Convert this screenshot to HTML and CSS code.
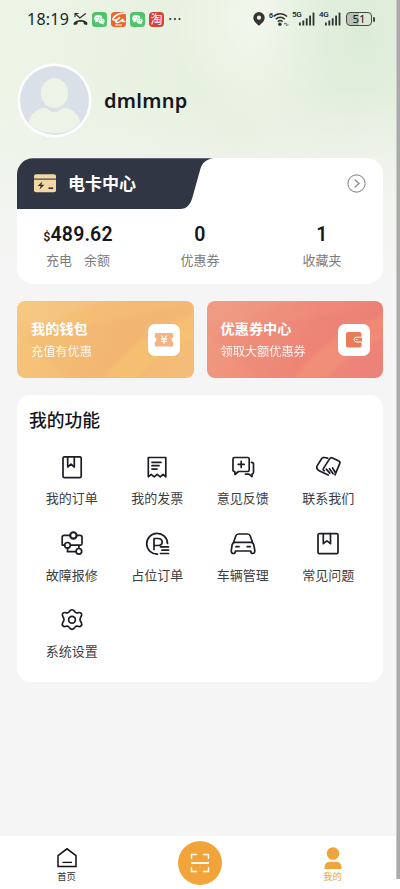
FILE: index.html
```html
<!DOCTYPE html>
<html lang="zh-CN">
<head>
<meta charset="utf-8">
<meta name="viewport" content="width=device-width, initial-scale=1">
<title>我的</title>
<link rel="stylesheet" href="styles.css">
</head>
<body>
<svg width="0" height="0" class="defs">
  <symbol id="wechat" viewBox="0 0 15 15"><rect width="15" height="15" rx="3.5" fill="#50c46c"/><ellipse cx="6.2" cy="6.3" rx="4" ry="3.4" fill="#fff"/><path d="M3.6 8.5 3.3 10.8 5.8 9.5z" fill="#fff"/><ellipse cx="9.6" cy="9.1" rx="3.3" ry="2.8" fill="#fff" stroke="#50c46c" stroke-width=".5"/><path d="M11.2 11l1 1.4-2.4-.6z" fill="#fff"/><g fill="#50c46c"><circle cx="4.9" cy="5.4" r=".5"/><circle cx="7.4" cy="5.4" r=".5"/><circle cx="8.6" cy="8.5" r=".4"/><circle cx="10.7" cy="8.5" r=".4"/></g></symbol>
  <symbol id="signal" viewBox="0 0 16 14"><g fill="#30332f"><rect y="10.5" width="1.8" height="3"/><rect x="3.4" y="8.5" width="1.8" height="5"/><rect x="6.8" y="6.3" width="1.8" height="7.2"/><rect x="10.2" y="3.6" width="1.8" height="9.9"/><rect x="13.6" y=".6" width="1.8" height="12.9"/></g></symbol>
</svg>
<div class="screen">
  <header class="hero">
    <div class="status">
      <span class="time">18:19</span>
      <svg class="missed" width="15" height="14" viewBox="0 0 15 14"><path d="M.6 12.2c-.3-1.2.8-2.4 2.6-3.2 3-1.3 6.200-1.300 9 0 1.700.8 2.500 2 2.200 3.200l-.5.9-3-.9-.5-2.100c-2-.6-3.800-.6-5.600 0l-.5 2.100-2.900.9z" fill="#272a26"/><path d="M2 5V1.500h3.500M2.200 1.700 6.800 6l6-4.500" fill="none" stroke="#272a26" stroke-width="1.100"/></svg>
      <svg class="app" width="15" height="15"><use href="#wechat"/></svg>
      <svg class="app" width="15" height="15" viewBox="0 0 15 15"><rect width="15" height="15" rx="3.500" fill="#e8672c"/><path d="M14.500 1.500C9 .8 3.200 3.200 2 6.800c-.5 2.400 4 1.200 7-1.600-2.500 2.300-5 4-3.800 5.200 1.500.8 5-1 6.800-3.400-.8 2-.4 3 2.300 2.200" fill="none" stroke="#fff" stroke-width="1.500"/><path d="M4 13h7" stroke="#fbd2b9" stroke-width="1.400"/></svg>
      <svg class="app" width="15" height="15"><use href="#wechat"/></svg>
      <span class="app taobao">淘</span>
      <svg class="more" width="12" height="4" viewBox="0 0 12 4"><g fill="#30332f"><circle cx="1.300" cy="2" r="1.100"/><circle cx="5.900" cy="2" r="1.100"/><circle cx="10.500" cy="2" r="1.100"/></g></svg>
      <svg class="pin" width="12" height="14" viewBox="0 0 12 14"><path d="M6 0a5.700 5.700 0 0 1 5.700 5.700C11.700 9.500 8 11.600 6 13.800 4 11.600.3 9.500.3 5.700A5.700 5.700 0 0 1 6 0z" fill="#343735"/><circle cx="6" cy="5.700" r="2.100" fill="#f0f5e9"/></svg>
      <svg class="wifi" width="20" height="16" viewBox="0 0 20 16"><g fill="none" stroke="#30332f" stroke-width="1.500"><path d="M4.500 5.600a9.500 9.500 0 0 1 13.600 0M6.800 8.200a6.300 6.300 0 0 1 9 0M8.900 10.700a3.400 3.400 0 0 1 4.700 0"/></g><circle cx="10.900" cy="13.200" r="1.700" fill="#30332f"/><path d="M15 12.700h2.500l-1-1M19.500 13.900H17l1 1" fill="none" stroke="#555" stroke-width=".8"/><text x="0" y="6.800" class="wifi-six">6</text></svg>
      <span class="network n5"><small>5G</small><svg width="16" height="14"><use href="#signal"/></svg></span>
      <span class="network n4"><small>4G</small><svg width="16" height="14"><use href="#signal"/></svg></span>
      <span class="battery">51</span><i class="nub"></i>
    </div>
    <div class="profile">
      <svg width="75" height="75" viewBox="0 0 75 75"><defs><clipPath id="face"><circle cx="37.500" cy="37.500" r="34"/></clipPath></defs><circle cx="37.500" cy="37.500" r="37" fill="#fff"/><circle cx="37.500" cy="37.500" r="34.500" fill="#dae0e8"/><g fill="#edf3e6" clip-path="url(#face)"><ellipse cx="37.500" cy="30.200" rx="13.600" ry="14.900"/><path d="M11.500 60c1.500-9 9-15 16.500-15 3.500 0 4 4 9.500 4s6-4 9.500-4c7.500 0 15 6 16.500 15C56 73.500 19 73.500 11.500 60z"/></g></svg>
      <h1>dmlmnp</h1>
    </div>
  </header>

  <main>
    <section class="card">
      <div class="card-head">
        <div class="card-tab">
          <svg class="tab-shape" width="197" height="51" viewBox="0 0 197 51"><path d="M0 16A16 16 0 0 1 16 .3h181c-7 .4-12 4.500-13.700 11l-7.800 28C173.500 46.500 170 51 163 51H0z" fill="#303643"/></svg>
          <svg class="card-icon" width="22" height="19" viewBox="0 0 22 19"><rect y=".3" width="22" height="18" rx="2" fill="#f3d8a3"/><path d="M0 5.100h22" stroke="#303643" stroke-width="1.100"/><path d="M8.300 7.500 3.600 12h3l-1.100 3.500 5-4.800H7.400z" fill="#303643"/><path d="M14.500 14.200h4.700" stroke="#303643" stroke-width="1.600"/></svg>
          <h2>电卡中心</h2>
        </div>
        <svg class="go" width="19" height="19" viewBox="0 0 19 19" fill="none" stroke="#929292"><circle cx="9.500" cy="9.500" r="8.600" stroke-width="1.100"/><path d="m7.700 5.500 4.300 4-4.300 4" stroke-width="1.500"/></svg>
      </div>
      <div class="stats">
        <div><strong><small>$</small>489.62</strong><span class="split"><i>充电</i><i>余额</i></span></div>
        <div><strong>0</strong><span>优惠券</span></div>
        <div><strong>1</strong><span>收藏夹</span></div>
      </div>
    </section>

    <section class="promos">
      <article class="promo wallet">
        <svg class="waves" viewBox="0 0 177 77" preserveAspectRatio="none"><path d="M0 0h100Q55 2 0 43z" fill="#fff" opacity=".06"/><path d="M0 20Q78 29 143 9T177 5v25Q118 34 90 77H50Q6 38 0 35z" fill="#ed944f" opacity=".07"/><path d="M88 77Q110 38 177 14v24Q142 50 122 77z" fill="#ffd568" opacity=".2"/></svg>
        <div><h3>我的钱包</h3><p>充值有优惠</p></div>
        <svg class="promo-icon" width="32" height="32" viewBox="0 0 32 32"><rect width="32" height="32" rx="7" fill="#fff"/><path d="M8 9h16q1.200 0 1.200 1.200v3.100a2.700 2.700 0 0 0 0 5v3.100q0 1.200-1.200 1.200H8q-1.200 0-1.200-1.200v-3.100a2.700 2.700 0 0 0 0-5v-3.100Q6.800 9 8 9z" fill="#f3b485"/><path d="m13.200 11.500 2.800 3.800 2.800-3.800M16 15.300V20M12.900 15.300h6.200M12.900 17.500h6.200" fill="none" stroke="#fff" stroke-width="1.200"/></svg>
      </article>
      <article class="promo coupon">
        <svg class="waves" viewBox="0 0 177 77" preserveAspectRatio="none"><path d="M0 0h100Q55 2 0 43z" fill="#fff" opacity=".03"/><path d="M0 20Q78 29 143 9T177 5v25Q118 34 90 77H50Q6 38 0 35z" fill="#e96468" opacity=".09"/><path d="M88 77Q110 38 177 14v24Q142 50 122 77z" fill="#ffb474" opacity=".16"/></svg>
        <div><h3>优惠券中心</h3><p>领取大额优惠券</p></div>
        <svg class="promo-icon" width="32" height="32" viewBox="0 0 32 32"><rect width="32" height="32" rx="7" fill="#fff"/><rect x="8" y="8" width="15.500" height="15.500" rx="2" fill="#e97b57"/><path d="M24 13.200h-5.500a2.400 2.400 0 0 0 0 4.800H24" fill="#e97b57" stroke="#fff"/><circle cx="18.800" cy="15.600" r=".8" fill="#fff"/></svg>
      </article>
    </section>

    <section class="functions">
      <h2>我的功能</h2>
      <div class="grid">
        <div><svg class="icon" viewBox="0 0 26 26"><rect x="4" y="2.900" width="18.200" height="20.800" rx="1.400"/><path d="M8.700 3v10l3.300-2.800 3.300 2.800V3"/></svg><span>我的订单</span></div>
        <div><svg class="icon" viewBox="0 0 26 26"><path d="M4.300 22.800V3.500h17.500v19.300l-2.700-2.500-2.900 2.500-3-2.500-3 2.500-3-2.500zM8 8.300h9M8 11.700h7M8 15.100h5"/></svg><span>我的发票</span></div>
        <div><svg class="icon" viewBox="0 0 26 26"><path d="M4.500 3.500h13.200q1.500 0 1.500 1.500v11q0 1.500-1.500 1.500H8.500l-3.500 3-.2-3Q3 17.500 3 16V5q0-1.500 1.500-1.500zM8.200 10.400h6M11.200 7.400v6M21.500 8.300q2 .2 2 1.800v8.200q0 1.600-1.500 1.800v2.500l-3-2.400h-3.500"/></svg><span>意见反馈</span></div>
        <div><svg class="icon" viewBox="0 0 26 26"><path d="m13.200 21-9.100-4.300q-3.600-2.300-1.700-5.300l4.200-6.700q1.200-1.600 2.800-1.200l3.200.7M9.400 16.700q-2-.6-.8-2.600l6-9.200q1.200-1.800 3-.9l6.200 3q1.700.8.9 2.700L20 20.800M11.300 15.100l3.500 4M14.500 14.800l3.600 5M17.600 14l3 5"/></svg><span>联系我们</span></div>
        <div><svg class="icon" viewBox="0 0 26 26"><path d="M11 4.300H5q-1.800 0-1.800 1.800v8h2M17.600 4.300h3.600q1.800 0 1.800 1.800v6.700q0 1.300-1.300 1.300H11.800M8.500 17.200v3.500h8M19.900 17V14"/><circle cx="14.400" cy="4.400" r="3.200" stroke-width="2.100"/><circle cx="8.500" cy="14.300" r="2.800"/><circle cx="19.900" cy="20.300" r="2.800"/></svg><span>故障报修</span></div>
        <div><svg class="icon" viewBox="0 0 26 26"><path d="M13.500 23.100A10.400 10.400 0 1 1 23.500 12.500M10 18.600V7.500h4q4.200.2 4.200 3.500T14 14.500h-4M16.500 15.800h8M18 19.200h6.500M16.500 22.500h8"/></svg><span>占位订单</span></div>
        <div><svg class="icon" viewBox="0 0 26 26"><path d="m3.300 12 2.500-7q.7-2 2.800-2h9q2.100 0 2.700 2l2.400 7M4.500 11.300h17q2 .4 2.300 2.700l1 5.300q.2 3.200-2.300 3.200-1.700 0-1.700-2.500H5.400q0 2.500-1.900 2.500-2.400 0-2.200-3.200l.8-5.300q.4-2.300 2.400-2.700zM6 15.700h3M17.200 15.700h3"/></svg><span>车辆管理</span></div>
        <div><svg class="icon" viewBox="0 0 26 26"><rect x="3" y="2.600" width="20" height="20" rx="1.400"/><path d="M8.300 2.700v10l3.600-2.800 3.600 2.800v-10"/></svg><span>常见问题</span></div>
        <div><svg class="icon" viewBox="0 0 26 26"><path d="M11.300 3.400q1.700-1.300 3.400 0l1.700 1.900q.8.700 1.900.5l1.800-.3q2-.1 2.500 1.800.2 1-.4 2l-.9 1.700q-.6 1.600 0 2.900l1 1.800q1 1.900-.2 3.200-.8.900-2.200.6l-1.700-.3q-1.100-.2-1.900.6l-1.700 1.900q-1.600 1.300-3.200 0l-1.700-1.900q-.8-.8-1.900-.6l-1.700.3q-1.400.3-2.200-.6-1.200-1.300-.2-3.200l1-1.800q.6-1.300 0-2.900l-.9-1.700q-.6-1-.4-2 .5-1.900 2.500-1.800l1.800.3q1.100.2 1.900-.5z"/><circle cx="13" cy="12.800" r="3.400"/></svg><span>系统设置</span></div>
      </div>
    </section>
  </main>

  <nav>
    <a><svg width="22" height="22" viewBox="0 0 22 22"><path d="M2 8.700v10.800h18V8.700l-9-6.900z" fill="none" stroke="#111" stroke-width="1.500"/><path d="M6.500 15.400h9.500" stroke="#111" stroke-width="1.300"/></svg><span>首页</span></a>
    <a class="scan"><svg width="20" height="20" viewBox="0 0 20 20" fill="none" stroke="#fff" stroke-width="1.400"><path d="M1.500 6V1.500H7M13 1.500h5.500V6M18.500 14v4.500H13M7 18.500H1.500V14"/><path d="M1 10h18" stroke-width="1.900"/></svg></a>
    <a class="active"><svg width="22" height="22" viewBox="0 0 22 22" fill="#efa53b"><circle cx="11" cy="6.500" r="6.300"/><path d="M2.500 22v-1.600q0-5.600 6-5.600h5q6 0 6 5.600V22z"/></svg><span>我的</span></a>
  </nav>
  <i class="scrollbar"></i>
</div>
</body>
</html>
```

FILE: styles.css
```css
* { box-sizing: border-box; margin: 0; padding: 0; }
body { font-family: "Noto Sans", "Noto Sans CJK SC", sans-serif; color: #15171c; background: #f5f5f5; }
svg { display: block; flex: none; }
i { font-style: normal; }
.defs { position: absolute; }
.screen {
  position: relative; width: 400px; height: 889px; overflow: hidden;
  display: flex; flex-direction: column;
  background:
    linear-gradient(to bottom, rgba(245,245,245,0) 90px, #f5f5f5 270px),
    radial-gradient(ellipse 115px 170px at 365px 35px, #dcebd8 0%, rgba(220,235,216,0) 100%),
    radial-gradient(ellipse 90px 110px at 265px 20px, #f4f8ef, rgba(244,248,239,0)),
    linear-gradient(100deg, #edf5e7, #e6f0de 48%, #eef4e8 72%, #e6f1e2);
}
.hero { height: 158px; flex: none; }
.status { height: 38px; display: flex; align-items: center; padding-left: 27px; }
.time { font: 16px/20px "Noto Sans", sans-serif; letter-spacing: .25px; width: 46px; color: #20231f; white-space: nowrap; }
.missed { margin-right: 4px; }
.app { margin-right: 4px; }
.taobao { width: 15px; height: 15px; border-radius: 4px; background: #d74137; color: #fff; font-size: 12px; line-height: 15px; text-align: center; margin-right: 5px; }
.pin { margin-left: 72px; margin-right: 4px; }
.wifi { margin-right: 3px; }
.wifi-six { font: 700 7px "Noto Sans", sans-serif; fill: #30332f; }
.network { position: relative; width: 23px; height: 14px; display: flex; justify-content: flex-end; }
.network small { position: absolute; left: 0; top: -1px; font: 500 8px/8px Roboto, sans-serif; letter-spacing: -.3px; }
.n5 { margin-right: 4px; }
.n4 { width: 22px; margin-right: 5px; }
.battery { width: 26px; height: 14px; border: 1.3px solid #454a44; border-radius: 4px; background: linear-gradient(90deg, #b7c0b3 52%, #dce8d6 52%); font: 400 11.500px/11.500px "Noto Sans", sans-serif; text-align: center; }
.nub { width: 1.500px; height: 5px; margin-left: 1px; background: #454a44; border-radius: 1px; }
.profile { display: flex; align-items: center; gap: 12px; padding: 25px 0 0 17px; }
.profile h1 { font: 600 20px/28px "Noto Sans", sans-serif; letter-spacing: .3px; }
main { flex: 1; padding: 0 17px; }
.card { height: 126px; border-radius: 16px; background: #fff; }
.card-head { height: 51px; display: flex; justify-content: space-between; align-items: center; padding-right: 17px; }
.card-tab { position: relative; width: 197px; height: 51px; display: flex; align-items: center; padding-left: 17px; gap: 12px; }
.tab-shape { position: absolute; left: 0; top: 0; }
.card-icon, .card-tab h2 { position: relative; }
.card-tab h2 { color: #fff; font-size: 17px; line-height: 24px; font-weight: 700; }
.stats { display: grid; grid-template-columns: repeat(3, 1fr); padding-top: 14px; text-align: center; }
.stats strong { display: block; height: 24px; font: 600 19.500px/24px Roboto, "Noto Sans", sans-serif; letter-spacing: .15px; white-space: nowrap; }
.stats strong small { font-size: 12.500px; font-weight: 500; }
.stats span { display: block; font-size: 13px; line-height: 20px; margin-top: 3px; color: #7c7c7c; }
.stats .split { display: flex; justify-content: center; gap: 12px; }
.promos { display: grid; grid-template-columns: 1fr 1fr; gap: 13px; margin-top: 17px; }
.promo { position: relative; height: 77px; border-radius: 8px; overflow: hidden; display: flex; align-items: center; justify-content: space-between; padding: 0 13.500px 0 14px; color: #fff; }
.wallet { background: linear-gradient(110deg, #f6c679, #f3b975 60%, #f4bd77); }
.coupon { background: linear-gradient(110deg, #f09a80, #ee8878 60%, #ed8178); }
.waves { position: absolute; inset: 0; width: 100%; height: 100%; filter: blur(1.500px); }
.promo > div, .promo-icon { position: relative; }
.promo h3 { font-size: 14.200px; line-height: 22px; font-weight: 700; }
.promo p { font-size: 12.200px; line-height: 20px; margin-top: 2px; white-space: nowrap; opacity: .92; }
.functions { height: 287px; margin-top: 17px; border-radius: 14px; background: #fff; padding: 12px 12px 0; }
.functions h2 { font-size: 17.800px; line-height: 26px; font-weight: 500; }
.grid { display: grid; grid-template-columns: repeat(4, 1fr); grid-auto-rows: 76.500px; margin-top: 21px; }
.grid > div { display: flex; flex-direction: column; align-items: center; }
.icon { width: 26px; height: 26px; fill: none; stroke: #1c1d25; stroke-width: 1.700; stroke-linecap: round; stroke-linejoin: round; overflow: visible; }
.grid span { font-size: 13px; line-height: 20px; margin-top: 8px; color: #3c3d42; }
nav { height: 53px; flex: none; background: #fff; display: grid; grid-template-columns: repeat(3, 133px); }
nav a { display: flex; flex-direction: column; align-items: center; padding-top: 11px; }
nav span { font-size: 9.300px; line-height: 13px; margin-top: 1px; color: #333; }
nav .scan { width: 44px; height: 44px; margin: 5px auto 0; padding: 0; justify-content: center; border-radius: 50%; background: #f1a43a; }
nav .active span { color: #efa53b; }
.scrollbar { position: absolute; right: 0; top: 0; width: 4px; height: 879px; background: #a9aba8; border-left: 1px solid #c9cbc7; }
```
